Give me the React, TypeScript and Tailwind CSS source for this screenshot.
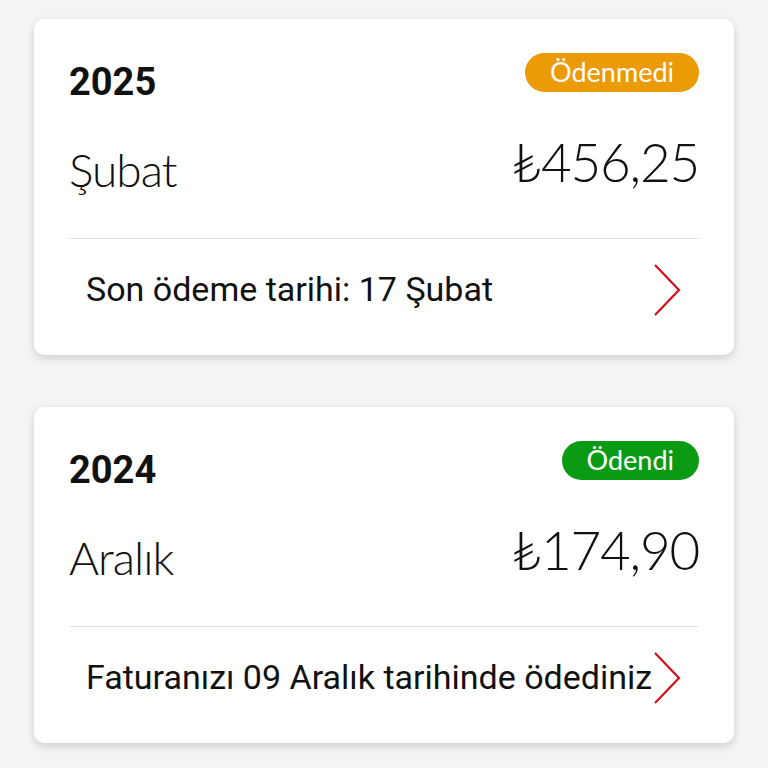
import React from 'react';

interface Bill {
  year: string;
  month: string;
  amount: string;
  status: 'paid' | 'unpaid';
  note: string;
}

const bills: Bill[] = [
  { year: '2025', month: 'Şubat', amount: '₺456,25', status: 'unpaid', note: 'Son ödeme tarihi: 17 Şubat' },
  { year: '2024', month: 'Aralık', amount: '₺174,90', status: 'paid', note: 'Faturanızı 09 Aralık tarihinde ödediniz' },
];

const Chevron = () => (
  <svg width="30" height="54" viewBox="0 0 30 54" fill="none" className="shrink-0">
    <path d="M3 2 L27 27 L3 52" stroke="#d0101b" strokeWidth="2.2" strokeLinejoin="miter" />
  </svg>
);

const BillCard: React.FC<{ bill: Bill }> = ({ bill }) => {
  const paid = bill.status === 'paid';
  return (
    <div className="bg-white rounded-[10px] shadow-[0_3px_8px_rgba(0,0,0,0.16)] pt-[34px]">
      <div className="flex items-start justify-between px-[35px]">
        <span className="mt-[6px] text-[38px] leading-[46px] font-bold text-[#111] font-['Roboto',sans-serif]">{bill.year}</span>
        <span
          className={`h-[39px] px-[25px] rounded-full flex items-center text-[27px] text-white font-['Lato',sans-serif] ${paid ? 'bg-[#0a9a14]' : 'bg-[#eb9a08]'}`}
        >
          {paid ? 'Ödendi' : 'Ödenmedi'}
        </span>
      </div>
      <div className="flex items-start justify-between px-[35px] mt-[27px] pb-[38px]">
        <span className="mt-[8px] text-[46px] leading-[60px] tracking-[-1px] font-light text-[#111] font-['Lato',sans-serif]">{bill.month}</span>
        <span className="text-[53px] leading-[60px] tracking-[-1.2px] font-light text-[#111] font-['Lato',sans-serif]">{bill.amount}</span>
      </div>
      <div className="mx-[35px] h-px bg-[#e2e2e2]" />
      <div className="h-[116px] pb-[15px] flex items-center justify-between pl-[52px] pr-[52px]">
        <span className="min-w-0 whitespace-nowrap text-[34px] text-[#111] font-['Roboto',sans-serif]">{bill.note}</span>
        <Chevron />
      </div>
    </div>
  );
};

export default function App() {
  return (
    <div className="min-h-screen bg-[#f4f4f4] px-[34px] pt-[19px] pb-6 flex flex-col gap-[52px]">
      {bills.map((b) => (
        <BillCard key={b.year} bill={b} />
      ))}
    </div>
  );
}
